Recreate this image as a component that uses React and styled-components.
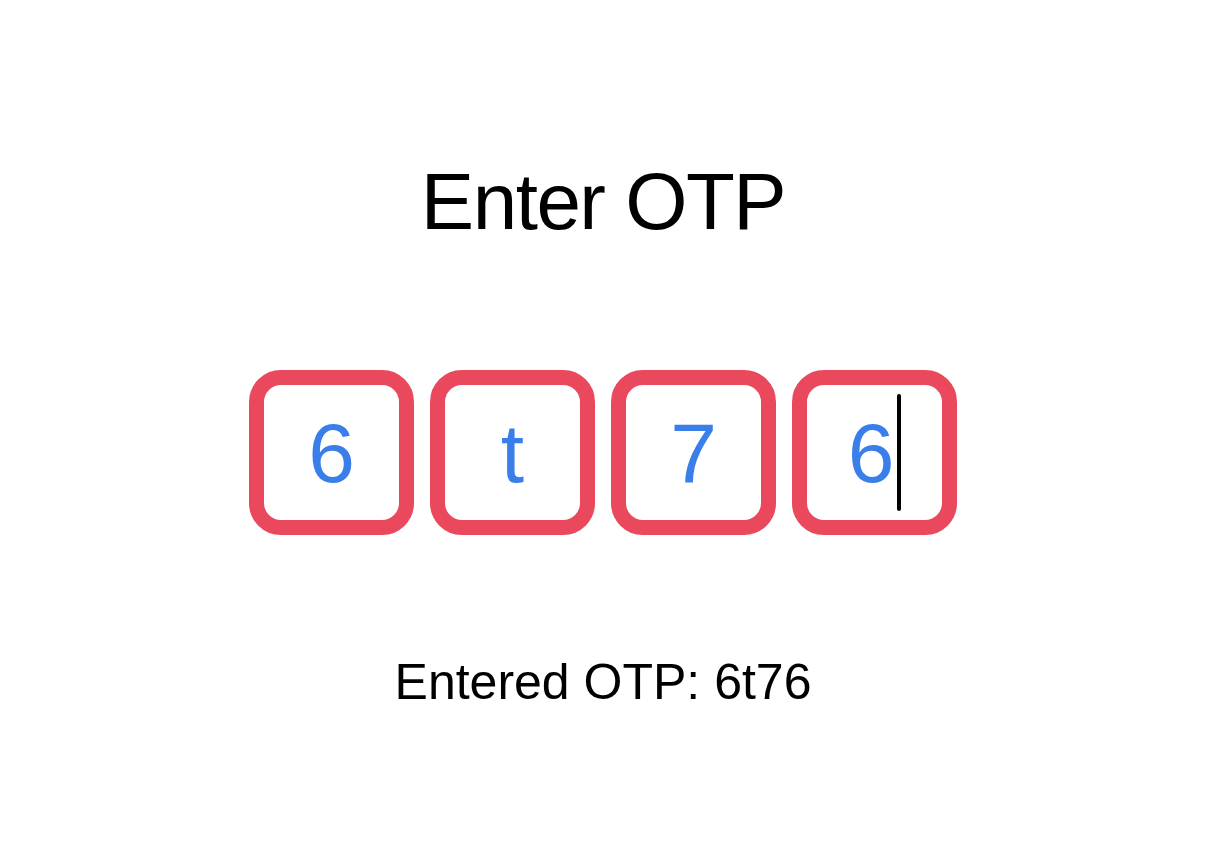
import React from 'react'
import styled, { createGlobalStyle } from 'styled-components'

// iOS-like OTP screen: four red boxes, blue digits

const GlobalStyle = createGlobalStyle`
  html, body {
    margin: 0;
    padding: 0;
    background: #ffffff;
  }
  body {
    font-family: "Liberation Sans", Arial, sans-serif;
  }
`

const Page = styled.div`
  display: flex;
  flex-direction: column;
  align-items: center;
  padding-top: 162px;
  min-height: 843px;
  box-sizing: border-box;
`

const Title = styled.h1`
  margin: 0;
  font-size: 80px;
  line-height: 80px;
  font-weight: 400;
  letter-spacing: -1.5px;
  color: #000;
`

const Boxes = styled.div`
  display: flex;
  gap: 16px;
  margin-top: 128px;
`

const Box = styled.div`
  width: 165px;
  height: 165px;
  box-sizing: border-box;
  border: 15px solid #e9485d;
  border-radius: 32px;
  display: flex;
  align-items: center;
  justify-content: center;
  font-size: 84px;
  color: #3a7eea;
  line-height: 1;
`

const Caret = styled.span`
  display: inline-block;
  width: 4px;
  height: 117px;
  margin-left: 3px;
  border-radius: 2px;
  background: #000;
`

const Result = styled.p`
  margin: 122px 0 0;
  font-size: 50px;
  line-height: 50px;
  color: #000;
`

const digits = ['6', 't', '7', '6']

export default function App () {
  return (
    <>
      <GlobalStyle />
      <Page>
        <Title>Enter OTP</Title>
        <Boxes>
          {digits.map((d, i) => (
            <Box key={i}>
              {d}
              {i === digits.length - 1 && <Caret />}
            </Box>
          ))}
        </Boxes>
        <Result>Entered OTP: {digits.join('')}</Result>
      </Page>
    </>
  )
}
